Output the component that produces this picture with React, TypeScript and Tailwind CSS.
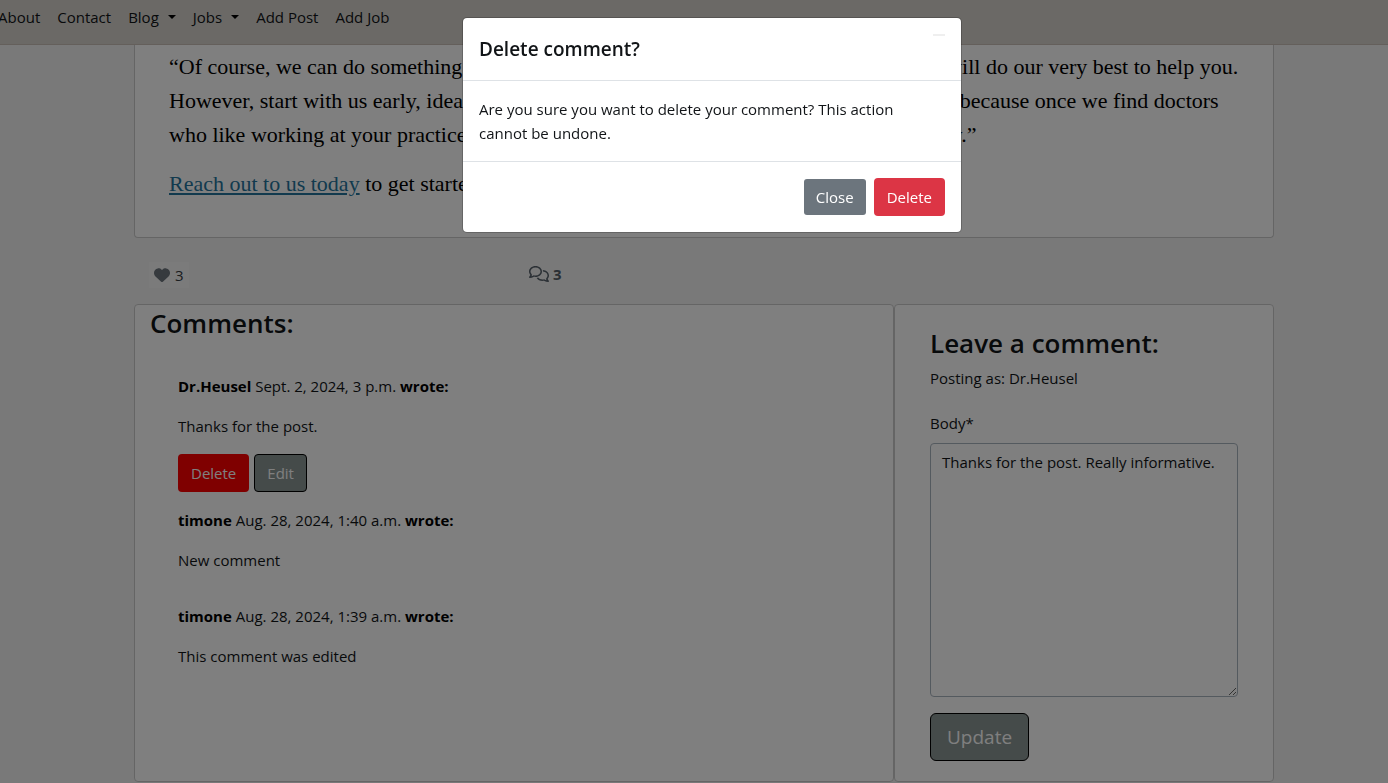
import React from "react";
import { FaHeart, FaRegComments } from "react-icons/fa6";

function Caret() {
  return (
    <span
      aria-hidden="true"
      className="inline-block border-x-4 border-t-4 border-x-transparent border-t-black"
    />
  );
}

function NavBar() {
  return (
    <nav className="flex h-[45px] items-start gap-[17px] overflow-hidden whitespace-nowrap border-b border-[#c8beb6] bg-[#d6d3cd] pt-[5px]">
      <a href="#about" className="-ml-0.5">About</a>
      <a href="#contact">Contact</a>
      <button type="button" className="flex items-center gap-[9px]">
        Blog <Caret />
      </button>
      <button type="button" className="flex items-center gap-[9px]">
        Jobs <Caret />
      </button>
      <a href="#add-post">Add Post</a>
      <a href="#add-job">Add Job</a>
    </nav>
  );
}

function Article() {
  return (
    <article className="rounded-b border border-t-0 border-[#cbcbcb] bg-white px-[34px] pt-[5px] pb-9 font-['Liberation_Serif',serif] text-[22px] leading-[34px] text-black">
      <p className="whitespace-nowrap">
        “Of course, we can do something for you. Just let us know today what you need and we will do our very best to help you.
        <br />
        However, start with us early, ideally a few months before you need any backup coverage, because once we find doctors
        <br />
        who like working at your practice, they will often want to return to work for you regularly.”
      </p>
      <p className="mt-[15px]">
        <a href="#contact" className="text-[#24749c] underline">
          Reach out to us today
        </a>{" "}
        to get started.
      </p>
    </article>
  );
}

function Reactions() {
  return (
    <div className="grid grid-cols-3 pt-6 pb-4 text-[#56606a]">
      <div className="px-[15px]">
        <button
          type="button"
          className="flex h-[26px] items-center gap-[5px] bg-[#f6f6f6] px-[5px] text-[#343a40]"
        >
          <FaHeart className="size-4 text-[#6c757d]" />
          3
        </button>
      </div>
      <div className="flex h-6 items-center gap-1 px-[15px] font-bold">
        <FaRegComments className="size-5" />
        3
      </div>
    </div>
  );
}

const comments = [
  { author: "Dr.Heusel", date: "Sept. 2, 2024, 3 p.m.", body: "Thanks for the post.", own: true },
  { author: "timone", date: "Aug. 28, 2024, 1:40 a.m.", body: "New comment", own: false },
  { author: "timone", date: "Aug. 28, 2024, 1:39 a.m.", body: "This comment was edited", own: false },
];

function CommentList() {
  return (
    <section className="w-2/3 rounded border border-[#cbcbcb] bg-white px-[15px]">
      <h3 className="text-[26px] leading-9 font-semibold">Comments:</h3>
      <div className="px-7 pt-[33px]">
        {comments.map((c) => (
          <div key={c.date} className="mb-4">
            <p>
              <strong className="text-black">{c.author}</strong> {c.date}{" "}
              <strong className="text-black">wrote:</strong>
            </p>
            <p className="mt-4">{c.body}</p>
            {c.own ? (
              <div className="mt-4 flex gap-[5px]">
                <button type="button" className="h-[38px] rounded bg-[#ff0000] px-[13px] text-white">
                  Delete
                </button>
                <button
                  type="button"
                  className="h-[38px] rounded border border-black bg-[#8a9694] px-3 text-white"
                >
                  Edit
                </button>
              </div>
            ) : (
              <div className="h-4" />
            )}
          </div>
        ))}
      </div>
    </section>
  );
}

function CommentForm() {
  return (
    <section className="w-1/3 rounded border border-[#cbcbcb] bg-white px-[35px] py-5">
      <h3 className="text-[26px] leading-9 font-semibold">Leave a comment:</h3>
      <p className="mt-[5px]">Posting as: Dr.Heusel</p>
      <form className="mt-[21px]">
        <label htmlFor="body" className="block">
          Body*
        </label>
        <textarea
          id="body"
          rows={10}
          defaultValue="Thanks for the post. Really informative."
          className="mt-2 block w-full resize rounded border border-[#a9b4be] bg-white px-[11px] py-1.5"
        />
        <button
          type="button"
          className="mt-4 h-12 rounded-md border border-black bg-[#8a9694] px-4 text-[19px] text-white"
        >
          Update
        </button>
      </form>
    </section>
  );
}

function DeleteDialog() {
  return (
    <div className="fixed inset-0 bg-black/50 pt-[17px] pl-9">
      <div
        role="dialog"
        aria-labelledby="dialog-title"
        className="mx-auto max-w-[500px] rounded-[5px] border border-black/20 bg-white bg-clip-padding"
      >
        <div className="flex items-start justify-between border-b border-[#dee2e6] p-4">
          <h5 id="dialog-title" className="text-[19px] leading-[30px] font-semibold">
            Delete comment?
          </h5>
          <button type="button" aria-label="Close dialog" className="h-0.5 w-3 bg-[#efefef]" />
        </div>
        <p className="p-4">
          Are you sure you want to delete your comment? This action cannot be undone.
        </p>
        <div className="flex items-center justify-end gap-2 border-t border-[#dee2e6] p-4">
          <button type="button" className="h-9 rounded-[3px] bg-[#6c757d] px-3 text-white">
            Close
          </button>
          <button type="button" className="h-[38px] rounded bg-[#dc3545] px-[13px] text-white">
            Delete
          </button>
        </div>
      </div>
    </div>
  );
}

export default function App() {
  return (
    <div className="min-h-screen bg-[#f3f3f3] font-['Open_Sans',sans-serif] text-[15px] leading-6 text-[#111417]">
      <NavBar />
      <main className="pl-5">
        <div className="mx-auto max-w-[1140px]">
          <Article />
          <Reactions />
          <div className="flex">
            <CommentList />
            <CommentForm />
          </div>
        </div>
      </main>
      <DeleteDialog />
    </div>
  );
}
